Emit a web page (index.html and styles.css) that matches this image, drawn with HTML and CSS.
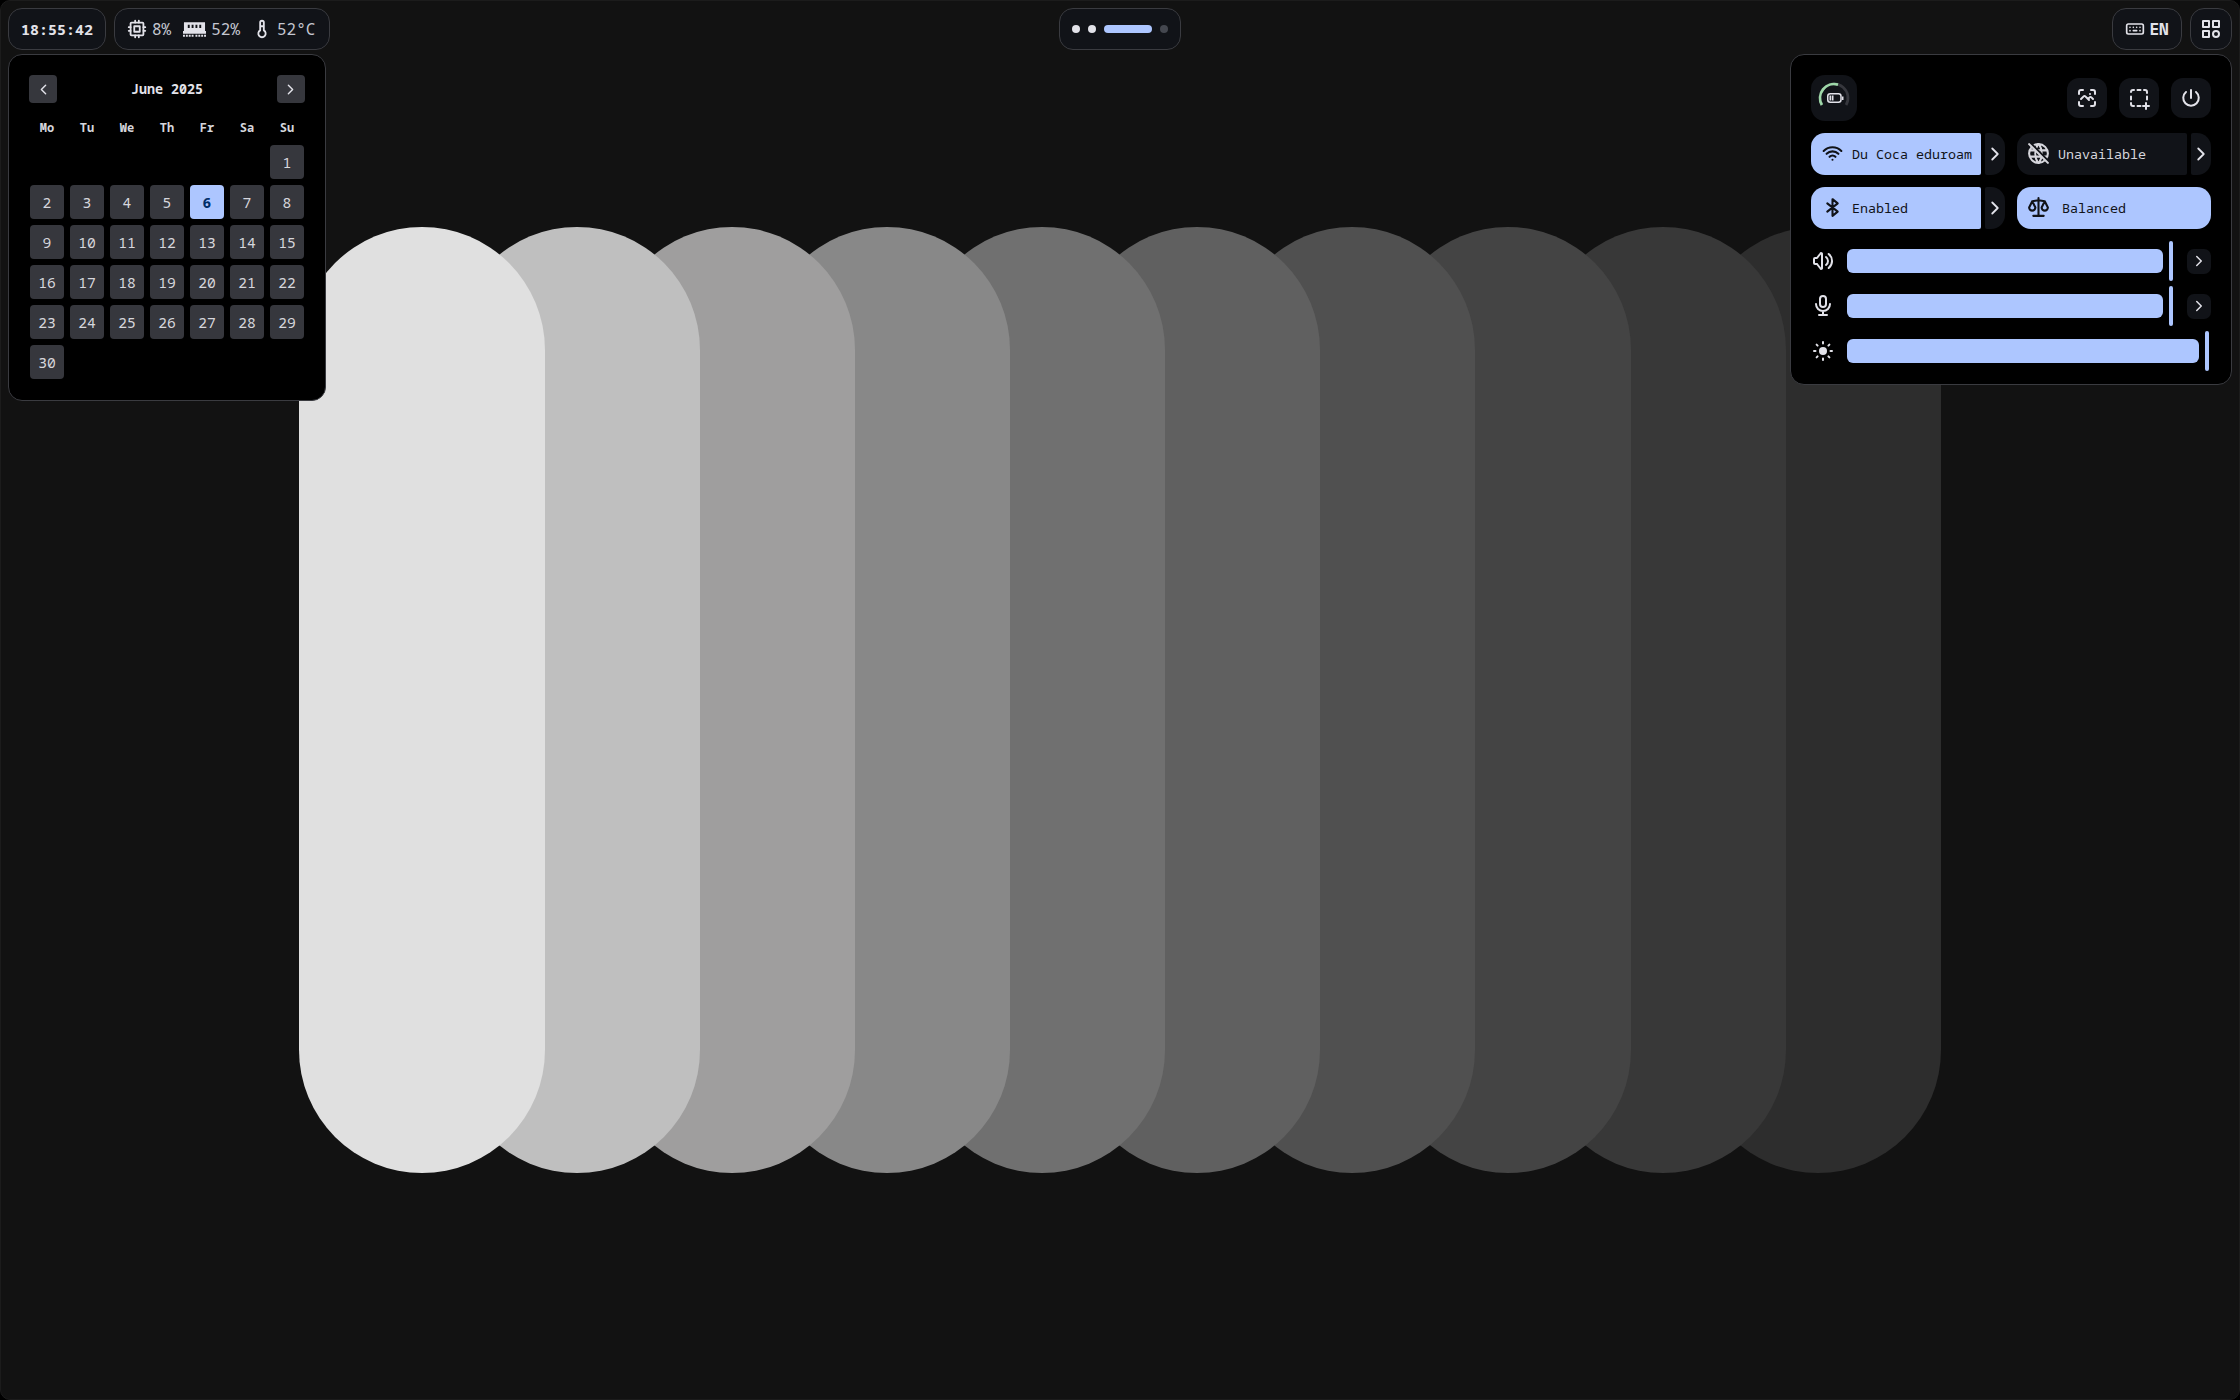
FILE: index.html
```html
<!DOCTYPE html>
<html lang="en">
<head>
  <meta charset="UTF-8" />
  <title>Desktop shell</title>
  <link rel="stylesheet" href="styles.css">
</head>
<body>
  <div class="screen">
    <header class="topbar">
      <div class="bar-left">
        <div class="widget clock">18:55:42</div>
        <div class="widget stats">
          <svg class="ico ico-stat" viewBox="0 0 24 24"><rect x="5" y="5" width="14" height="14" rx="1"/><rect x="9" y="9" width="6" height="6"/><path d="M3 10h2M3 14h2M10 3v2M14 3v2M21 10h-2M21 14h-2M14 21v-2M10 21v-2"/></svg>
          <span class="stat-val">8%</span>
          <svg class="ram" viewBox="0 0 24 15"><path d="M1 0h22v9h1v3h-24v-3h1zM0 13h2v2h-2zM3 13h2v2h-2zM6 13h2v2h-2zM9 13h2v2h-2zM13 13h2v2h-2zM16 13h2v2h-2zM19 13h2v2h-2zM22 13h2v2h-2z"/><path class="ram-cut" d="M5 2.500h2v3.500h-2zM9 2.500h2v3.500h-2zM13 2.500h2v3.500h-2zM17 2.500h2v3.500h-2z"/></svg>
          <span class="stat-val">52%</span>
          <svg class="ico ico-stat temp" viewBox="0 0 24 24"><path d="M10 13.500a4 4 0 1 0 4 0v-8.500a2 2 0 0 0-4 0v8.500M10 9h4"/></svg>
          <span class="stat-val">52°C</span>
        </div>
      </div>
      <div class="widget workspaces">
        <span class="dot"></span>
        <span class="dot"></span>
        <span class="dot dot-active"></span>
        <span class="dot dot-empty"></span>
      </div>
      <div class="bar-right">
        <div class="widget lang">
          <svg class="ico ico-lang" viewBox="0 0 24 24"><rect x="2" y="6" width="20" height="12" rx="2"/><path d="M6 10v.01M10 10v.01M14 10v.01M18 10v.01M6 14v.01M18 14v.01M10 14l4 .01"/></svg>
          <span>EN</span>
        </div>
        <div class="widget apps">
          <svg class="ico" viewBox="0 0 24 24"><path d="M4 4h6v6h-6zM14 4h6v6h-6zM4 14h6v6h-6zM14 17a3 3 0 1 0 6 0a3 3 0 1 0-6 0"/></svg>
        </div>
      </div>
    </header>

    <section class="panel calendar">
      <div class="cal-head">
        <button class="cal-nav"><svg class="ico" viewBox="0 0 24 24"><path d="M15 6l-6 6l6 6"/></svg></button>
        <span class="cal-title">June 2025</span>
        <button class="cal-nav"><svg class="ico" viewBox="0 0 24 24"><path d="M9 6l6 6l-6 6"/></svg></button>
      </div>
      <div class="cal-grid">
        <span class="wd">Mo</span><span class="wd">Tu</span><span class="wd">We</span><span class="wd">Th</span><span class="wd">Fr</span><span class="wd">Sa</span><span class="wd">Su</span>
        <span class="day first">1</span>
        <span class="day">2</span><span class="day">3</span><span class="day">4</span><span class="day">5</span><span class="day today">6</span><span class="day">7</span><span class="day">8</span>
        <span class="day">9</span><span class="day">10</span><span class="day">11</span><span class="day">12</span><span class="day">13</span><span class="day">14</span><span class="day">15</span>
        <span class="day">16</span><span class="day">17</span><span class="day">18</span><span class="day">19</span><span class="day">20</span><span class="day">21</span><span class="day">22</span>
        <span class="day">23</span><span class="day">24</span><span class="day">25</span><span class="day">26</span><span class="day">27</span><span class="day">28</span><span class="day">29</span>
        <span class="day">30</span>
      </div>
    </section>

    <section class="panel quick">
      <div class="quick-top">
        <div class="battery">
          <svg class="battery-svg" viewBox="0 0 46 46">
            <path class="arc-bg" d="M10.900 30a14 14 0 1 1 24.200 0"/>
            <path class="arc-on" d="M10.900 30a14 14 0 0 1 16.100-20.400"/>
            <rect class="batt-body" x="16.750" y="18.750" width="13.250" height="8.500" rx="2.500"/>
            <rect class="batt-tip" x="31" y="21.500" width="1.500" height="3.500"/>
            <rect class="batt-fill" x="18.500" y="20.500" width="1.800" height="5"/>
            <rect class="batt-fill" x="21" y="20.500" width="1.500" height="5"/>
          </svg>
        </div>
        <div class="quick-actions">
          <button class="round-btn"><svg class="ico" viewBox="0 0 24 24"><path d="M15 8h.01M6 13l2.644-2.644a1.210 1.210 0 0 1 1.712 0l3.644 3.644M13 13l1.644-1.644a1.210 1.210 0 0 1 1.712 0l1.644 1.644M4 8v-2a2 2 0 0 1 2-2h2M4 16v2a2 2 0 0 0 2 2h2M16 4h2a2 2 0 0 1 2 2v2M16 20h2a2 2 0 0 0 2-2v-2"/></svg></button>
          <button class="round-btn"><svg class="ico" viewBox="0 0 24 24"><path d="M4 6a2 2 0 0 1 2-2h1M10.500 4h3M17 4h1a2 2 0 0 1 2 2v1M20 10.500v3M4 10.500v3M4 17v1a2 2 0 0 0 2 2h1M10.500 20h3M16 20h6M19 17v6"/></svg></button>
          <button class="round-btn"><svg class="ico" viewBox="0 0 24 24"><path d="M7 6a7.750 7.750 0 1 0 10 0M12 4v8"/></svg></button>
        </div>
      </div>

      <div class="toggles">
        <div class="toggle-wrap">
          <div class="toggle on">
            <svg class="ico ico-toggle" viewBox="0 0 24 24"><path d="M12 18v.01M9.172 15.172a4 4 0 0 1 5.656 0M6.343 12.343a8 8 0 0 1 11.314 0M3.515 9.515c4.686-4.687 12.284-4.687 17 0"/></svg>
            <span>Du Coca eduroam</span>
          </div>
          <div class="toggle-more"><svg class="ico" viewBox="0 0 24 24"><path d="M9 6l6 6l-6 6"/></svg></div>
        </div>
        <div class="toggle-wrap">
          <div class="toggle">
            <svg class="ico ico-toggle" viewBox="0 0 24 24"><path d="M12 3a9 9 0 1 0 0 18a9 9 0 1 0 0-18M3.600 9h16.800M3.600 15h16.800M11.500 3a17 17 0 0 0 0 18M12.500 3a17 17 0 0 1 0 18"/><path class="slash-gap" d="M4.500 2.500l18 18"/><path d="M3 3l18 18"/></svg>
            <span>Unavailable</span>
          </div>
          <div class="toggle-more"><svg class="ico" viewBox="0 0 24 24"><path d="M9 6l6 6l-6 6"/></svg></div>
        </div>
        <div class="toggle-wrap">
          <div class="toggle on">
            <svg class="ico ico-toggle" viewBox="0 0 24 24"><path d="M7 8l10 8l-5 4v-16l5 4l-10 8"/></svg>
            <span>Enabled</span>
          </div>
          <div class="toggle-more"><svg class="ico" viewBox="0 0 24 24"><path d="M9 6l6 6l-6 6"/></svg></div>
        </div>
        <div class="toggle-wrap">
          <div class="toggle on toggle-full">
            <svg class="ico ico-toggle" viewBox="0 0 24 24"><path d="M7 20h10M6 6l6-1l6 1M12 3v17M9 12l-3-6l-3 6a3 3 0 0 0 6 0M21 12l-3-6l-3 6a3 3 0 0 0 6 0"/></svg>
            <span>Balanced</span>
          </div>
        </div>
      </div>

      <div class="sliders">
        <div class="slider-row">
          <svg class="ico ico-slider" viewBox="0 0 24 24"><path d="M15 8a5 5 0 0 1 0 8M17.700 5a9 9 0 0 1 0 14M6 15h-2a1 1 0 0 1-1-1v-4a1 1 0 0 1 1-1h2l3.500-4.500a.8 .8 0 0 1 1.500 .5v14a.8 .8 0 0 1-1.500 .5l-3.500-4.500"/></svg>
          <div class="track"></div>
          <div class="handle"></div>
          <button class="slider-more"><svg class="ico" viewBox="0 0 24 24"><path d="M9 6l6 6l-6 6"/></svg></button>
        </div>
        <div class="slider-row">
          <svg class="ico ico-slider" viewBox="0 0 24 24"><path d="M9 5a3 3 0 0 1 6 0v5a3 3 0 0 1-6 0zM5 10a7 7 0 0 0 14 0M8 21h8M12 17v4"/></svg>
          <div class="track"></div>
          <div class="handle"></div>
          <button class="slider-more"><svg class="ico" viewBox="0 0 24 24"><path d="M9 6l6 6l-6 6"/></svg></button>
        </div>
        <div class="slider-row">
          <svg class="ico ico-slider" viewBox="0 0 24 24"><circle class="sun-core" cx="12" cy="12" r="4"/><path d="M3 12h1.500M12 3v1.500M19.500 12h1.500M12 19.500v1.500M5.600 5.600l1 1M18.400 5.600l-1 1M17.400 17.400l1 1M6.600 17.400l-1 1"/></svg>
          <div class="track"></div>
          <div class="handle"></div>
        </div>
      </div>
    </section>

    <main class="wallpaper">
      <div class="pill p1"></div>
      <div class="pill p2"></div>
      <div class="pill p3"></div>
      <div class="pill p4"></div>
      <div class="pill p5"></div>
      <div class="pill p6"></div>
      <div class="pill p7"></div>
      <div class="pill p8"></div>
      <div class="pill p9"></div>
      <div class="pill p10"></div>
    </main>
  </div>
</body>
</html>
```

FILE: styles.css
```css
* {
  box-sizing: border-box;
}

html, body {
  margin: 0;
  height: 100%;
  background-color: #000;
}

body {
  font-family: "Noto Sans Mono", "DejaVu Sans Mono", monospace;
  color: #e2e2e9;
}

button {
  font: inherit;
  color: inherit;
  border: none;
  padding: 0;
}

.screen {
  position: relative;
  height: 1400px;
  overflow: hidden;
  background-color: #121212;
  border: 1px solid #1c1c1c;
  border-radius: 10px;
}

/* shared svg icon look */
.ico {
  width: 24px;
  height: 24px;
  fill: none;
  stroke: currentColor;
  stroke-width: 2;
  stroke-linecap: round;
  stroke-linejoin: round;
  flex: none;
}

/* top bar */
.topbar {
  position: absolute;
  top: 7px;
  left: 7px;
  right: 7px;
  z-index: 30;
  display: grid;
  grid-template-columns: 1fr auto 1fr;
  align-items: start;
}

.bar-left, .bar-right {
  display: flex;
  gap: 8px;
}

.bar-right {
  justify-content: flex-end;
}

.widget {
  display: flex;
  align-items: center;
  height: 42px;
  background-color: #111318;
  border: 1px solid #3a3b40;
  border-radius: 14px;
}

.clock {
  width: 98px;
  justify-content: center;
  padding-bottom: 1px;
  font-size: 15px;
  font-weight: bold;
}

.stats {
  width: 216px;
  padding-left: 11px;
  font-size: 16px;
  color: #c4c6d0;
}

.ico-stat {
  width: 22px;
  height: 22px;
  color: #e2e2e9;
}

.temp {
  margin-left: 11px;
}

.stat-val {
  margin-left: 4px;
}

.ram {
  width: 23px;
  height: 15px;
  margin-left: 12px;
  margin-right: 1px;
  fill: #e2e2e9;
}

.ram-cut {
  fill: #111318;
}

.workspaces {
  gap: 8px;
  width: 122px;
  justify-content: center;
}

.dot {
  width: 8px;
  height: 8px;
  border-radius: 4px;
  background-color: #e2e2e9;
}

.dot-active {
  width: 48px;
  background-color: #adc6ff;
}

.dot-empty {
  background-color: #44474f;
}

.lang {
  width: 70px;
  justify-content: center;
  gap: 4px;
  font-size: 16px;
  font-weight: bold;
}

.ico-lang {
  width: 20px;
  height: 20px;
}

.apps {
  width: 42px;
  justify-content: center;
}

/* panels */
.panel {
  position: absolute;
  top: 53px;
  z-index: 20;
  background-color: #000;
  border: 1px solid #3a3b40;
  border-radius: 14px;
}

.calendar {
  left: 7px;
  width: 318px;
  height: 347px;
  padding: 20px 20px 0 20px;
}

.cal-head {
  display: flex;
  align-items: center;
  justify-content: space-between;
  height: 28px;
}

.cal-nav {
  display: flex;
  align-items: center;
  justify-content: center;
  width: 28px;
  height: 28px;
  border-radius: 4px;
  background-color: #36373d;
}

.cal-nav .ico {
  width: 17px;
  height: 17px;
}

.cal-title {
  font-size: 13.33px;
  font-weight: bold;
}

.cal-grid {
  display: grid;
  grid-template-columns: repeat(7, 34px);
  grid-template-rows: 22px;
  grid-auto-rows: 34px;
  gap: 6px;
  margin-top: 14px;
  margin-left: 1px;
}

.wd {
  display: flex;
  align-items: center;
  justify-content: center;
  padding-bottom: 2px;
  font-size: 12px;
  font-weight: bold;
  color: #d6d6dc;
}

.day {
  display: flex;
  align-items: center;
  justify-content: center;
  padding-bottom: 1px;
  border-radius: 4px;
  background-color: #36373d;
  font-size: 14.67px;
  color: #d6d6dc;
}

.first {
  grid-column: 7;
}

.today {
  background-color: #adc6ff;
  color: #002e69;
  font-weight: bold;
}

/* quick settings */
.quick {
  right: 7px;
  width: 442px;
  height: 331px;
  padding: 20px 20px 0 20px;
}

.quick-top {
  display: flex;
  align-items: center;
  justify-content: space-between;
  height: 46px;
}

.battery {
  width: 46px;
  height: 46px;
  border-radius: 14px;
  background-color: #111318;
}

.battery-svg {
  display: block;
  width: 46px;
  height: 46px;
  fill: none;
}

.arc-bg {
  stroke: #36373d;
  stroke-width: 2.7;
}

.arc-on {
  stroke: #9ed8a8;
  stroke-width: 2.7;
}

.batt-body {
  stroke: #e2e2e9;
  stroke-width: 1.5;
}

.batt-tip, .batt-fill {
  fill: #e2e2e9;
}

.quick-actions {
  display: flex;
  gap: 12px;
}

.round-btn {
  display: flex;
  align-items: center;
  justify-content: center;
  width: 40px;
  height: 40px;
  border-radius: 12px;
  background-color: #111318;
}

.toggles {
  display: grid;
  grid-template-columns: 194px 194px;
  gap: 12px;
  margin-top: 12px;
}

.toggle-wrap {
  display: flex;
  gap: 4px;
  height: 42px;
}

.toggle {
  display: flex;
  align-items: center;
  gap: 7px;
  width: 170px;
  padding-left: 9px;
  padding-bottom: 1px;
  border-radius: 14px 2px 2px 14px;
  background-color: #111318;
  font-size: 13.33px;
  color: #d6d6dc;
}

.toggle.on {
  background-color: #adc6ff;
  color: #111318;
}

.toggle-full {
  width: 194px;
  gap: 11px;
  border-radius: 14px;
}

.ico-toggle {
  width: 25px;
  height: 25px;
}

.slash-gap {
  stroke: #111318;
  stroke-width: 2.5;
}

.toggle-more {
  display: flex;
  align-items: center;
  justify-content: center;
  width: 20px;
  border-radius: 2px 14px 14px 2px;
  background-color: #111318;
}

.toggle-more .ico {
  width: 22px;
  height: 22px;
}

.sliders {
  display: flex;
  flex-direction: column;
  gap: 5px;
  margin-top: 12px;
}

.slider-row {
  display: flex;
  align-items: center;
  height: 40px;
}

.ico-slider {
  margin-right: 12px;
}

.sun-core {
  fill: currentColor;
  stroke: none;
}

.track {
  flex: 1;
  height: 24px;
  border-radius: 6px;
  background-color: #adc6ff;
}

.handle {
  width: 4px;
  height: 40px;
  margin-left: 6px;
  margin-right: 2px;
  border-radius: 2px;
  background-color: #adc6ff;
}

.slider-more {
  display: flex;
  align-items: center;
  justify-content: center;
  width: 24px;
  height: 25px;
  margin-left: 12px;
  border-radius: 7px;
  background-color: #111318;
}

.slider-more .ico {
  width: 18px;
  height: 18px;
}

/* wallpaper */
.wallpaper {
  display: flex;
  align-items: center;
  justify-content: center;
  height: 100%;
  padding-right: 0.5px;
}

.pill {
  flex: none;
  width: 246px;
  height: 946px;
  border-radius: 123px;
  margin-left: -90.9px;
}

.p1 { margin-left: 0; background-color: #e0e0e0; z-index: 10; }
.p2 { background-color: #bfbfbf; z-index: 9; }
.p3 { background-color: #9f9e9e; z-index: 8; }
.p4 { background-color: #888888; z-index: 7; }
.p5 { background-color: #707070; z-index: 6; }
.p6 { background-color: #606060; z-index: 5; }
.p7 { background-color: #505050; z-index: 4; }
.p8 { background-color: #444444; z-index: 3; }
.p9 { background-color: #383838; z-index: 2; }
.p10 { background-color: #2d2d2d; z-index: 1; }
```
